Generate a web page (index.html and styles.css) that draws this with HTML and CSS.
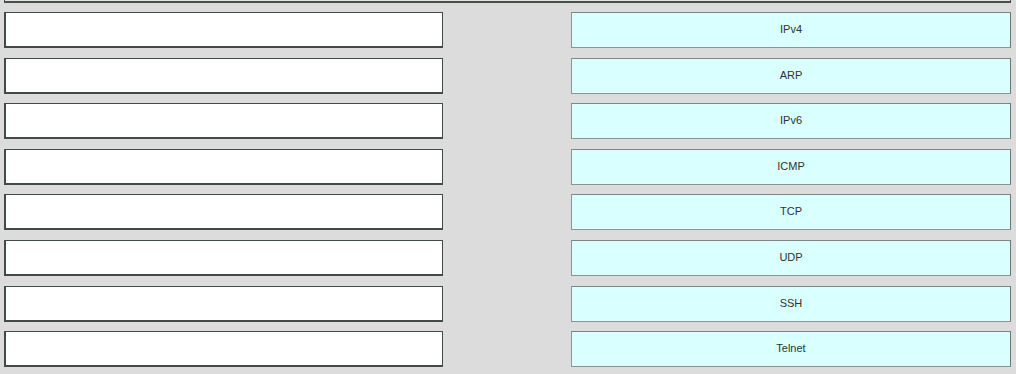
FILE: index.html
```html
<!DOCTYPE html>
<html>
<head>
  <title>Match Protocols</title>
  <link rel="stylesheet" href="styles.css">
</head>
<body>

<div class="top-bar"></div>

<div class="board">
  <div class="slot"></div><div class="item">IPv4</div>
  <div class="slot"></div><div class="item">ARP</div>
  <div class="slot"></div><div class="item">IPv6</div>
  <div class="slot"></div><div class="item">ICMP</div>
  <div class="slot"></div><div class="item">TCP</div>
  <div class="slot"></div><div class="item">UDP</div>
  <div class="slot"></div><div class="item">SSH</div>
  <div class="slot"></div><div class="item">Telnet</div>
</div>

</body>
</html>
```

FILE: styles.css
```css
body {
  margin: 0;
  background: #dcdcdc;
  font-family: 'Liberation Sans', Arial, sans-serif;
  height: 374px;
  overflow: hidden;
}

.top-bar {
  margin: -10px 5px 0 4px;
  height: 13px;
  box-sizing: border-box;
  border: 1px solid #4a4f4a;
  border-top: none;
  border-bottom-width: 2px;
  background: #e4e4e4;
}

.board {
  display: grid;
  grid-template-columns: 439px 440px;
  grid-auto-rows: 36px;
  column-gap: 128px;
  row-gap: 9.6px;
  padding: 9px 0 0 4px;
}

.slot {
  background: #fff;
  box-sizing: border-box;
  border: 1px solid #424949;
  border-left-width: 2px;
  border-bottom-width: 2px;
}

.item {
  background: #d9ffff;
  box-sizing: border-box;
  border: 1px solid #8e9393;
  border-top-color: #7f8585;
  border-right-color: #6f7575;
  display: flex;
  align-items: center;
  justify-content: center;
  font-size: 11px;
  color: #2f3333;
  padding-bottom: 2px;
}
```
